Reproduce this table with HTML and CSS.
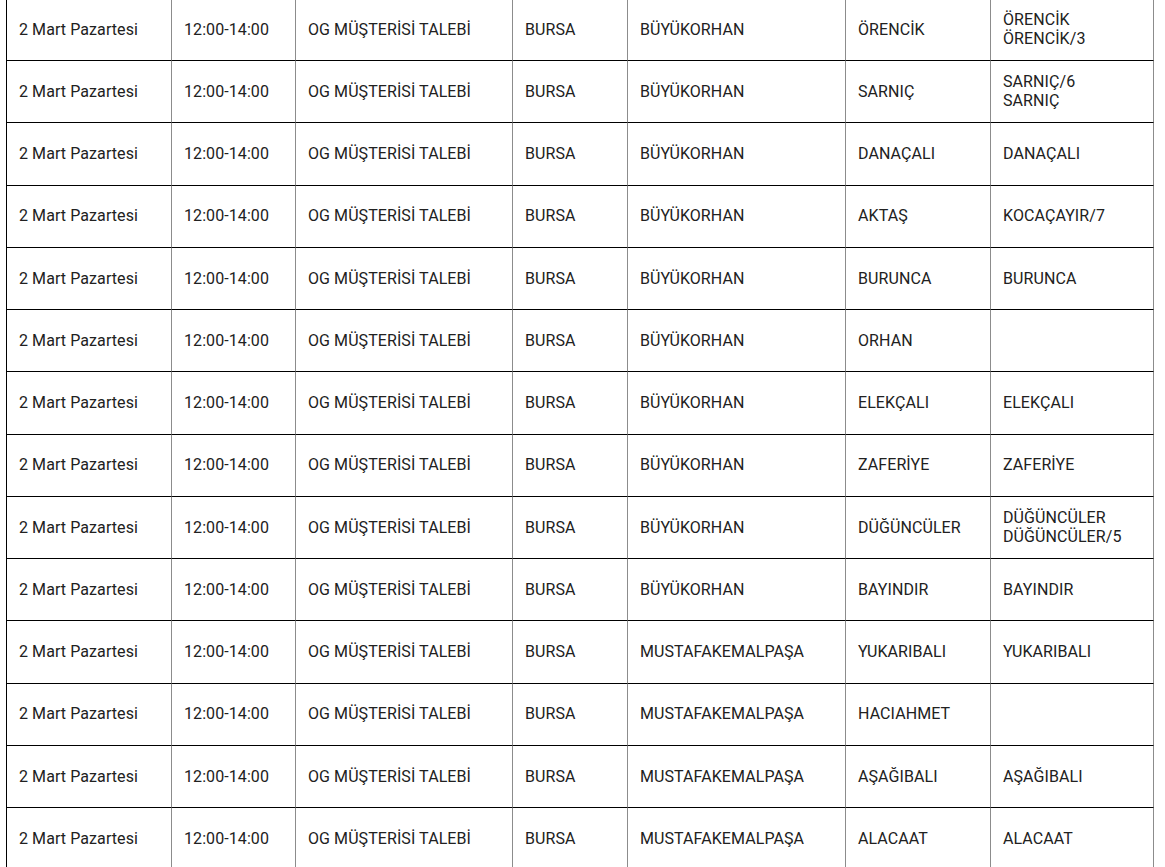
FILE: index.html
```html
<!DOCTYPE html>
<html lang="tr">
<head>
<meta charset="utf-8">
<title>Planlı Kesintiler</title>
<link rel="stylesheet" href="styles.css">
</head>
<body>
<div class="wrap">
<table class="outages">
<tbody>
<tr><td class="c1">2 Mart Pazartesi</td><td class="c2">12:00-14:00</td><td class="c3">OG MÜŞTERİSİ TALEBİ</td><td class="c4">BURSA</td><td class="c5">BÜYÜKORHAN</td><td class="c6">ÖRENCİK</td><td class="c7">ÖRENCİK<br>ÖRENCİK/3</td></tr>
<tr><td>2 Mart Pazartesi</td><td>12:00-14:00</td><td>OG MÜŞTERİSİ TALEBİ</td><td>BURSA</td><td>BÜYÜKORHAN</td><td>SARNIÇ</td><td>SARNIÇ/6<br>SARNIÇ</td></tr>
<tr><td>2 Mart Pazartesi</td><td>12:00-14:00</td><td>OG MÜŞTERİSİ TALEBİ</td><td>BURSA</td><td>BÜYÜKORHAN</td><td>DANAÇALI</td><td>DANAÇALI</td></tr>
<tr><td>2 Mart Pazartesi</td><td>12:00-14:00</td><td>OG MÜŞTERİSİ TALEBİ</td><td>BURSA</td><td>BÜYÜKORHAN</td><td>AKTAŞ</td><td>KOCAÇAYIR/7</td></tr>
<tr><td>2 Mart Pazartesi</td><td>12:00-14:00</td><td>OG MÜŞTERİSİ TALEBİ</td><td>BURSA</td><td>BÜYÜKORHAN</td><td>BURUNCA</td><td>BURUNCA</td></tr>
<tr><td>2 Mart Pazartesi</td><td>12:00-14:00</td><td>OG MÜŞTERİSİ TALEBİ</td><td>BURSA</td><td>BÜYÜKORHAN</td><td>ORHAN</td><td></td></tr>
<tr><td>2 Mart Pazartesi</td><td>12:00-14:00</td><td>OG MÜŞTERİSİ TALEBİ</td><td>BURSA</td><td>BÜYÜKORHAN</td><td>ELEKÇALI</td><td>ELEKÇALI</td></tr>
<tr><td>2 Mart Pazartesi</td><td>12:00-14:00</td><td>OG MÜŞTERİSİ TALEBİ</td><td>BURSA</td><td>BÜYÜKORHAN</td><td>ZAFERİYE</td><td>ZAFERİYE</td></tr>
<tr><td>2 Mart Pazartesi</td><td>12:00-14:00</td><td>OG MÜŞTERİSİ TALEBİ</td><td>BURSA</td><td>BÜYÜKORHAN</td><td>DÜĞÜNCÜLER</td><td>DÜĞÜNCÜLER<br>DÜĞÜNCÜLER/5</td></tr>
<tr><td>2 Mart Pazartesi</td><td>12:00-14:00</td><td>OG MÜŞTERİSİ TALEBİ</td><td>BURSA</td><td>BÜYÜKORHAN</td><td>BAYINDIR</td><td>BAYINDIR</td></tr>
<tr><td>2 Mart Pazartesi</td><td>12:00-14:00</td><td>OG MÜŞTERİSİ TALEBİ</td><td>BURSA</td><td>MUSTAFAKEMALPAŞA</td><td>YUKARIBALI</td><td>YUKARIBALI</td></tr>
<tr><td>2 Mart Pazartesi</td><td>12:00-14:00</td><td>OG MÜŞTERİSİ TALEBİ</td><td>BURSA</td><td>MUSTAFAKEMALPAŞA</td><td>HACIAHMET</td><td></td></tr>
<tr><td>2 Mart Pazartesi</td><td>12:00-14:00</td><td>OG MÜŞTERİSİ TALEBİ</td><td>BURSA</td><td>MUSTAFAKEMALPAŞA</td><td>AŞAĞIBALI</td><td>AŞAĞIBALI</td></tr>
<tr><td>2 Mart Pazartesi</td><td>12:00-14:00</td><td>OG MÜŞTERİSİ TALEBİ</td><td>BURSA</td><td>MUSTAFAKEMALPAŞA</td><td>ALACAAT</td><td>ALACAAT</td></tr>
</tbody>
</table>
</div>
</body>
</html>
```
FILE: styles.css
```css
html, body {
  margin: 0;
  padding: 0;
  background: #ffffff;
}

body {
  font-family: Roboto, "Liberation Sans", Arial, sans-serif;
  font-size: 16px;
  line-height: 18.75px;
  letter-spacing: 0.08px;
  color: #212121;
  overflow: hidden;
}

.wrap {
  padding-left: 6px;
}

.outages {
  width: 1148px;
  table-layout: fixed;
  border-collapse: separate;
  border-spacing: 0;
  margin-top: -1.25px;
}

.outages td {
  height: 37.5px;
  padding: 12.375px 12px 11.375px;
  border-left: 1px solid #8c8c8c;
  border-bottom: 1px solid #000000;
  vertical-align: middle;
  text-align: left;
  white-space: nowrap;
}

.outages td:first-child {
  border-left-color: #000000;
}

.outages td:last-child {
  border-right: 1px solid #8c8c8c;
}

.outages .c1 { width: 140px; }
.outages .c2 { width: 99px; }
.outages .c3 { width: 192px; }
.outages .c4 { width: 90px; }
.outages .c5 { width: 193px; }
.outages .c6 { width: 120px; }
.outages .c7 { width: 138px; }
```
